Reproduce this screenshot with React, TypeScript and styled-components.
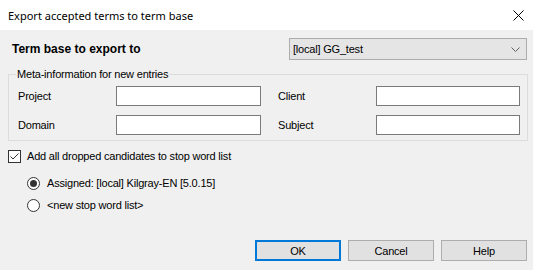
import React from "react";
import styled, { createGlobalStyle } from "styled-components";

const Global = createGlobalStyle`
  html, body { margin: 0; padding: 0; background: #f0f0f0; }
  body { font-family: "Liberation Sans", Arial, sans-serif; font-size: 11px; letter-spacing: -0.2px; color: #000; }
`;

const Window = styled.div`
  width: 533px;
  height: 270px;
  display: flex;
  flex-direction: column;
  background: #f0f0f0;
  overflow: hidden;
`;

const TitleBar = styled.div`
  height: 30px;
  flex: 0 0 30px;
  background: #fff;
  display: flex;
  align-items: center;
  justify-content: space-between;
  padding: 0 0 0 8px;
`;

const Title = styled.span`
  font-family: "Noto Sans", "Open Sans", sans-serif;
  font-size: 11px;
  letter-spacing: 0;
  color: #000;
`;

const CloseBtn = styled.div`
  width: 46px;
  height: 30px;
  display: flex;
  align-items: center;
  justify-content: center;
  margin-right: -8px;
`;

const Body = styled.div`
  display: flex;
  flex-direction: column;
  padding: 8px 6px 0 8px;
`;

const TopRow = styled.div`
  display: flex;
  align-items: center;
  justify-content: space-between;
  height: 22px;
`;

const BoldLabel = styled.span`
  font-weight: bold;
  font-size: 12px;
  letter-spacing: 0;
  padding-left: 4px;
`;

const Combo = styled.div`
  width: 238px;
  height: 22px;
  box-sizing: border-box;
  border: 1px solid #adadad;
  background: #e5e5e5;
  display: flex;
  align-items: center;
  justify-content: space-between;
  padding: 0 6px 0 3px;
`;

const Group = styled.fieldset`
  margin: 7px 0 0 0;
  padding: 5px 6px 5px 9px;
  border: 1px solid #dcdcdc;
  width: 520px;
  box-sizing: border-box;
`;

const Legend = styled.legend`
  padding: 0 1px;
  margin-left: -2px;
  line-height: 14px;
  font-size: 11px;
`;

const FieldGrid = styled.div`
  display: grid;
  grid-template-columns: 98px 145px 17px 98px 144px;
  row-gap: 9px;
  align-items: center;
`;

const FieldLabel = styled.span``;

const TextBox = styled.div`
  height: 20px;
  box-sizing: border-box;
  border: 1px solid #7a7a7a;
  background: #fff;
`;

const Spacer = styled.span``;

const CheckRow = styled.label`
  display: flex;
  align-items: center;
  gap: 6px;
  margin-top: 8px;
  height: 14px;
`;

const CheckBox = styled.span`
  width: 13px;
  height: 13px;
  box-sizing: border-box;
  border: 1px solid #333;
  background: #fff;
  display: flex;
  align-items: center;
  justify-content: center;
`;

const RadioRow = styled.label<{ $top: number }>`
  display: flex;
  align-items: center;
  gap: 7px;
  margin-left: 19px;
  margin-top: ${(p) => p.$top}px;
  height: 14px;
`;

const Radio = styled.span<{ $on?: boolean }>`
  width: 13px;
  height: 13px;
  box-sizing: border-box;
  border: 1px solid #333;
  border-radius: 50%;
  background: #fff;
  display: flex;
  align-items: center;
  justify-content: center;
  &::after {
    content: "";
    display: ${(p) => (p.$on ? "block" : "none")};
    width: 7px;
    height: 7px;
    border-radius: 50%;
    background: #333;
  }
`;

const ButtonRow = styled.div`
  display: flex;
  justify-content: flex-end;
  gap: 7px;
  margin-top: 28px;
`;

const Button = styled.div<{ $default?: boolean }>`
  width: 86px;
  height: 21px;
  box-sizing: border-box;
  border: ${(p) => (p.$default ? "2px solid #0078d7" : "1px solid #adadad")};
  background: #e1e1e1;
  display: flex;
  align-items: center;
  justify-content: center;
`;

export default function App() {
  return (
    <>
      <Global />
      <Window>
        <TitleBar>
          <Title>Export accepted terms to term base</Title>
          <CloseBtn>
            <svg width="11" height="11" viewBox="0 0 11 11">
              <path d="M0.5 0.5 L10.5 10.5 M10.5 0.5 L0.5 10.5" stroke="#000" strokeWidth="1" />
            </svg>
          </CloseBtn>
        </TitleBar>
        <Body>
          <TopRow>
            <BoldLabel>Term base to export to</BoldLabel>
            <Combo>
              <span>[local] GG_test</span>
              <svg width="9" height="5" viewBox="0 0 9 5">
                <path d="M0.5 0.5 L4.5 4.5 L8.5 0.5" stroke="#606060" fill="none" strokeWidth="1" />
              </svg>
            </Combo>
          </TopRow>
          <Group>
            <Legend>Meta-information for new entries</Legend>
            <FieldGrid>
              <FieldLabel>Project</FieldLabel>
              <TextBox />
              <Spacer />
              <FieldLabel>Client</FieldLabel>
              <TextBox />
              <FieldLabel>Domain</FieldLabel>
              <TextBox />
              <Spacer />
              <FieldLabel>Subject</FieldLabel>
              <TextBox />
            </FieldGrid>
          </Group>
          <CheckRow>
            <CheckBox>
              <svg width="11" height="11" viewBox="0 0 11 11">
                <path d="M1.5 5.5 L4 8 L9.5 2.5" stroke="#333" fill="none" strokeWidth="1" />
              </svg>
            </CheckBox>
            <span>Add all dropped candidates to stop word list</span>
          </CheckRow>
          <RadioRow $top={13}>
            <Radio $on />
            <span>Assigned: [local] Kilgray-EN [5.0.15]</span>
          </RadioRow>
          <RadioRow $top={8}>
            <Radio />
            <span>&lt;new stop word list&gt;</span>
          </RadioRow>
          <ButtonRow>
            <Button $default>OK</Button>
            <Button>Cancel</Button>
            <Button>Help</Button>
          </ButtonRow>
        </Body>
      </Window>
    </>
  );
}
